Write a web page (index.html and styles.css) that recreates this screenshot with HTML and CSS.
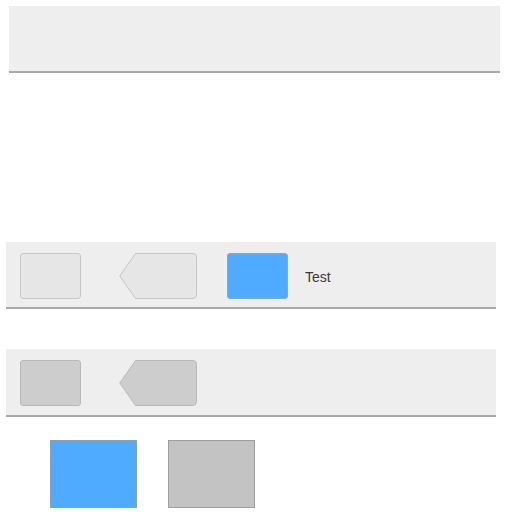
FILE: index.html
```html
<!DOCTYPE html>
<html>
<head>
<meta charset="utf-8">
<link rel="stylesheet" href="styles.css">
</head>
<body>
<div class="page">
  <div class="topbar"></div>
  <div class="toolbar toolbar-light">
    <div class="btn"></div>
    <svg class="back" width="78" height="46" viewBox="0 0 78 46">
      <path d="M16.5 0.5 H74 Q77.5 0.5 77.5 4 V41.5 Q77.5 45.5 74 45.5 H16.5 L0.8 23 Z" />
    </svg>
    <div class="btn btn-blue"></div>
    <span class="label">Test</span>
  </div>
  <div class="toolbar toolbar-dark">
    <div class="btn"></div>
    <svg class="back" width="78" height="46" viewBox="0 0 78 46">
      <path d="M16.5 0.5 H74 Q77.5 0.5 77.5 4 V41.5 Q77.5 45.5 74 45.5 H16.5 L0.8 23 Z" />
    </svg>
  </div>
  <div class="swatches">
    <div class="swatch swatch-blue"></div>
    <div class="swatch swatch-grey"></div>
  </div>
</div>
</body>
</html>
```

FILE: styles.css
```css
html, body {
  margin: 0;
  padding: 0;
  background: #ffffff;
  font-family: "Liberation Sans", Arial, sans-serif;
}

.page {
  display: flex;
  flex-direction: column;
  padding-top: 6px;
}

.topbar {
  margin-left: 9px;
  width: 491px;
  height: 65px;
  background: #eeeeee;
  border-bottom: 2px solid #a9a9a9;
}

.toolbar {
  margin-left: 6px;
  width: 476px;
  height: 63px;
  padding: 2px 0 0 14px;
  background: #eeeeee;
  border-bottom: 2px solid #a9a9a9;
  display: flex;
  align-items: center;
}

.toolbar-light {
  margin-top: 169px;
}

.toolbar-dark {
  margin-top: 40px;
  height: 64px;
}

.btn {
  width: 59px;
  height: 44px;
  border: 1px solid #c6c6c6;
  border-radius: 3px;
  background: #e6e6e6;
  flex: none;
}

.back {
  display: block;
  margin-left: 38px;
  flex: none;
}

.back path {
  fill: #e6e6e6;
  stroke: #c6c6c6;
  stroke-width: 1;
}

.toolbar-dark .btn {
  background: #cdcdcd;
  border-color: #b9b9b9;
}

.toolbar-dark .back path {
  fill: #cdcdcd;
  stroke: #b9b9b9;
}

.btn-blue {
  margin-left: 30px;
  background: #4eabff;
  border-color: #8aa9c6;
}

.label {
  margin-left: 17px;
  margin-top: 3px;
  font-size: 14px;
  color: #3a3a3a;
}

.swatches {
  display: flex;
  gap: 31px;
  margin-top: 23px;
  margin-left: 50px;
}

.swatch {
  width: 85px;
  height: 66px;
}

.swatch-blue {
  background: #4eabff;
  border: 1px solid #8aa0b4;
}

.swatch-grey {
  background: #c3c3c3;
  border: 1px solid #9d9d9d;
}
```
